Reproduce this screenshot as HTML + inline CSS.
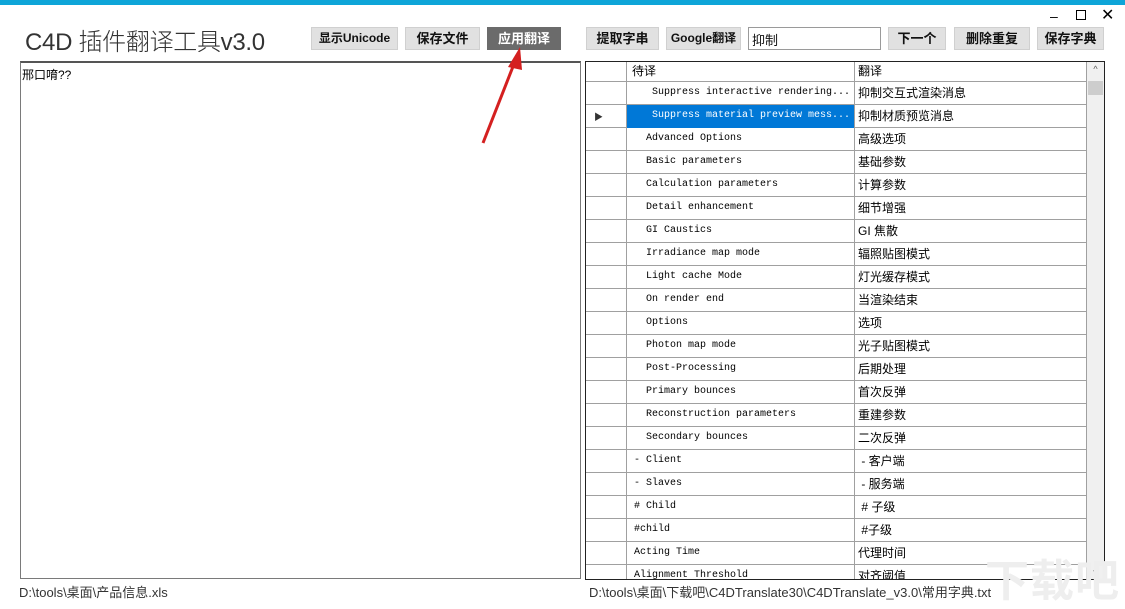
<!DOCTYPE html>
<html><head><meta charset="utf-8"><style>
*{margin:0;padding:0;box-sizing:border-box}
body{width:1125px;height:600px;background:#fff;position:relative;overflow:hidden;font-family:"Liberation Sans","Noto Sans CJK SC",sans-serif}
.top{position:absolute;left:0;top:0;width:1125px;height:5px;background:#0ea5d8}
.title{position:absolute;left:25px;top:22px;font-size:24px;font-weight:300;color:#333;letter-spacing:-0.3px}
.btn{position:absolute;top:27px;height:23px;background:#e1e1e1;border:1px solid #d0d0d0;font-size:13px;font-weight:bold;color:#111;text-align:center;line-height:21px;white-space:nowrap}
.dark{background:#6b6b6b;border-color:#6b6b6b;color:#fff}
.inp{position:absolute;left:748px;top:27px;width:133px;height:23px;border:1px solid #9a9a9a;font-size:13px;padding:2px 3px;color:#111}
.ta{position:absolute;left:20px;top:61px;width:561px;height:518px;border:1px solid #7a7a7a;border-top:2px solid #555;font-size:12px;padding:3px 1px}
.grid{position:absolute;left:585px;top:61px;width:520px;height:519px;border:1px solid #222;overflow:hidden}
.row{position:absolute;left:0;height:23px;width:501px;border-bottom:1px solid #a0a0a0}
.rh{position:absolute;left:0;top:0;width:41px;height:23px;border-right:1px solid #a0a0a0}
.c1{position:absolute;left:41px;top:0;width:228px;height:23px;border-right:1px solid #a0a0a0;font-family:"Liberation Mono","Noto Sans CJK SC",monospace;font-size:10px;line-height:12px;padding-top:5px;white-space:nowrap;overflow:hidden}
.c2{position:absolute;left:269px;top:0;width:232px;height:23px;border-right:1px solid #a0a0a0;font-size:12px;line-height:22px;padding-left:3px;white-space:nowrap}
.sb{position:absolute;left:501px;top:0;width:17px;height:517px;background:#f0f0f0}
.status{position:absolute;top:582px;font-size:13px;color:#333;white-space:nowrap}
</style></head><body>
<div class="top"></div>
<div style="position:absolute;left:1050px;top:8px;font-size:14px;color:#000">‒</div>
<div style="position:absolute;left:1076px;top:10px;width:10px;height:10px;border:1.5px solid #000"></div>
<div style="position:absolute;left:1101px;top:5px;font-size:16px;color:#000">✕</div>
<div class="title">C4D 插件翻译工具v3.0</div>
<div class="btn" style="left:311px;width:87px;font-size:12px">显示Unicode</div>
<div class="btn" style="left:405px;width:75px">保存文件</div>
<div class="btn dark" style="left:487px;width:74px">应用翻译</div>
<div class="btn" style="left:586px;width:73px">提取字串</div>
<div class="btn" style="left:666px;width:75px;font-size:12px">Google翻译</div>
<div class="inp">抑制</div>
<div class="btn" style="left:888px;width:58px">下一个</div>
<div class="btn" style="left:954px;width:76px">删除重复</div>
<div class="btn" style="left:1037px;width:67px">保存字典</div>
<div class="ta">邢口唷??</div>
<div class="grid">
<div class="row" style="top:0;height:20px"><div class="rh" style="height:20px"></div><div class="c1" style="height:20px;font-family:'Liberation Sans','Noto Sans CJK SC',sans-serif;font-size:12px;line-height:19px;padding-top:0;padding-left:5px">待译</div><div class="c2" style="height:20px;line-height:19px">翻译</div></div>
<div id="rows"></div>
<div class="sb"><div style="text-align:center;font-size:9px;color:#555;margin-top:2px">^</div><div style="position:absolute;left:1px;top:19px;width:15px;height:14px;background:#cdcdcd"></div><div style="position:absolute;bottom:2px;width:17px;text-align:center;font-size:9px;color:#555">v</div></div>
</div>
<svg style="position:absolute;left:0;top:0" width="1125" height="600"><line x1="483" y1="143" x2="514" y2="64" stroke="#d42020" stroke-width="3"/><polygon points="520,47 508,67 522,70" fill="#d42020"/></svg>
<div class="status" style="left:19px">D:\tools\桌面\产品信息.xls</div>
<div class="status" style="left:589px">D:\tools\桌面\下载吧\C4DTranslate30\C4DTranslate_v3.0\常用字典.txt</div>
<div style="position:absolute;left:985px;top:545px;font-size:44px;font-weight:bold;color:#eeeeee;white-space:nowrap;letter-spacing:1px">下载吧</div>
<script>
var d=[["Suppress interactive rendering...","抑制交互式渲染消息",25],["Suppress material preview mess...","抑制材质预览消息",25],
["Advanced Options","高级选项",19],["Basic parameters","基础参数",19],["Calculation parameters","计算参数",19],["Detail enhancement","细节增强",19],["GI Caustics","GI 焦散",19],["Irradiance map mode","辐照贴图模式",19],["Light cache Mode","灯光缓存模式",19],["On render end","当渲染结束",19],["Options","选项",19],["Photon map mode","光子贴图模式",19],["Post-Processing","后期处理",19],["Primary bounces","首次反弹",19],["Reconstruction parameters","重建参数",19],["Secondary bounces","二次反弹",19],
["- Client","&nbsp;- 客户端",7],["- Slaves","&nbsp;- 服务端",7],["# Child","&nbsp;# 子级",7],["#child","&nbsp;#子级",7],["Acting Time","代理时间",7],["Alignment Threshold","对齐阈值",7]];
var h="";d.forEach(function(r,i){var sel=i==1;h+='<div class="row" style="top:'+(20+i*23)+'px"><div class="rh">'+(sel?'<span style="position:absolute;left:8px;top:5px;font-size:9px;color:#333">▶</span>':'')+'</div><div class="c1" style="padding-left:'+r[2]+'px;'+(sel?'background:#0078d7;color:#fff':'')+'">'+r[0]+'</div><div class="c2">'+r[1]+'</div></div>';});
document.getElementById("rows").innerHTML=h;
</script>
</body></html>
